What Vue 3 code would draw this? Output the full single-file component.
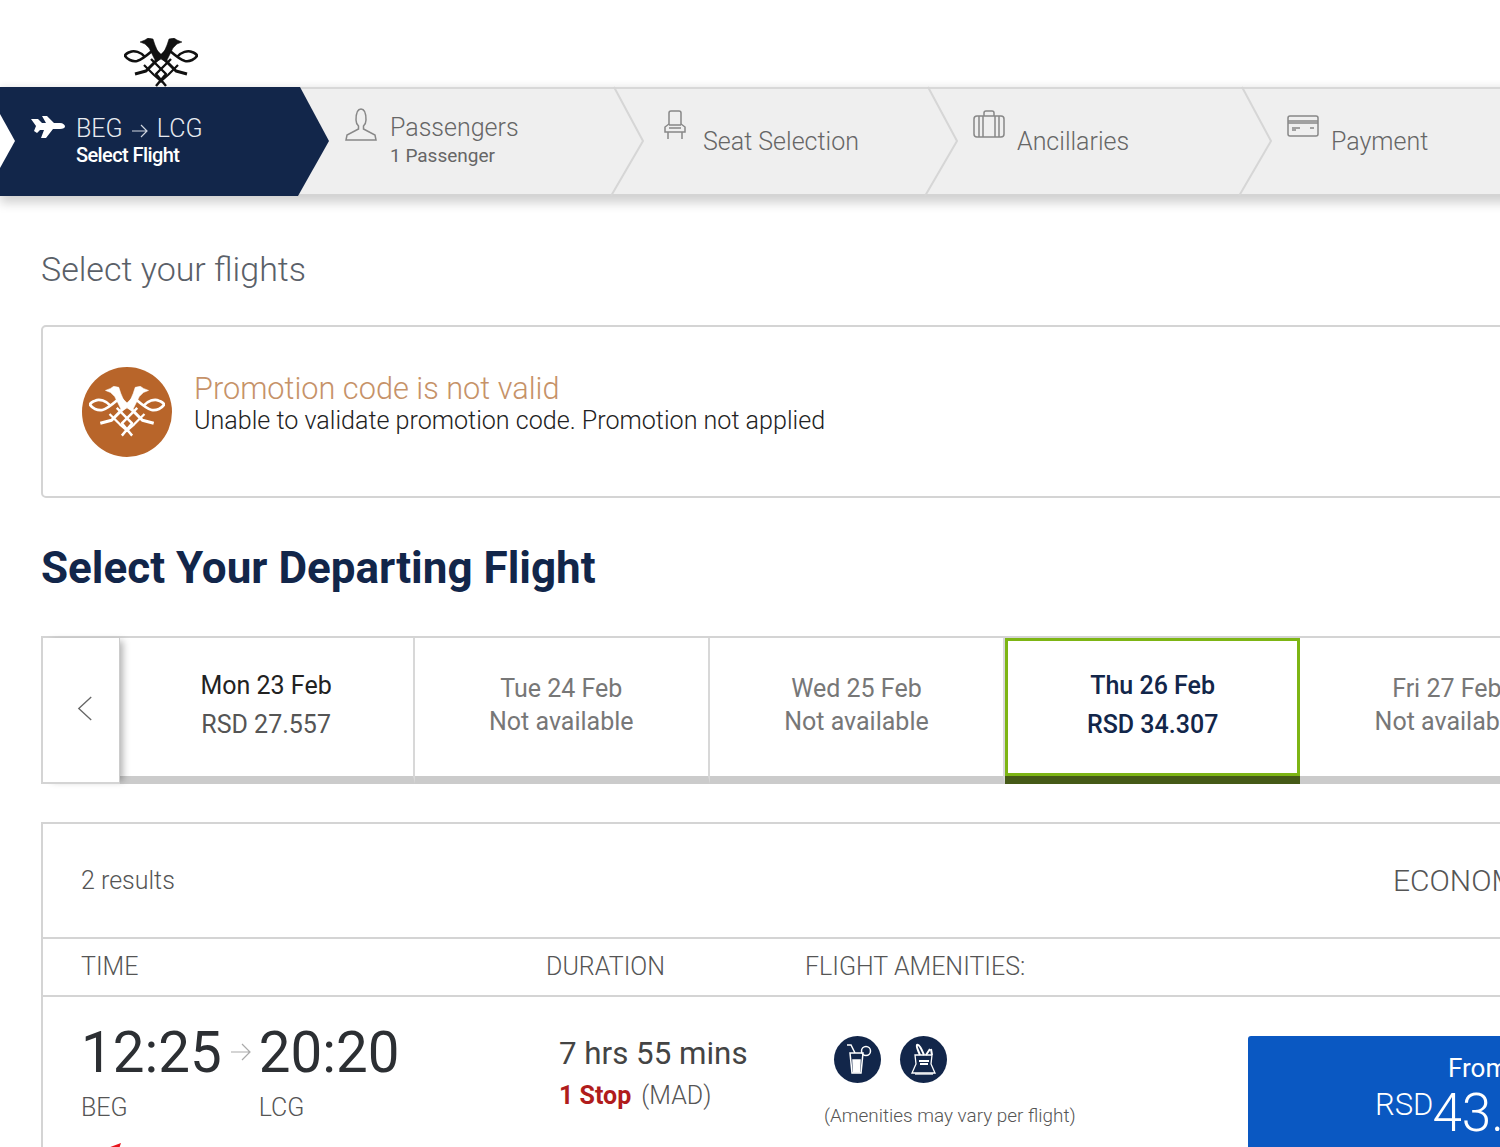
<script setup>
const eagle = [
  { d: 'M16 4 L21 2 L24 0 L29 1 L31 7 L37 21 L32 24 L25 10 L21 6 Z', w: 0.500, f: true },
  { d: 'M21 19 C17 14 10 12 6 14 C3 15 1 17 1 18 C3 21 8 24 13 23 C17 22 21 19 28 13', w: 2.600 },
  { d: 'M11 36 L22 33 L44 11', w: 3 },
  { d: 'M20 27 L30 37 L38 44', w: 2.200 },
  { d: 'M27 21 L42 36 L32 48', w: 2.400 }
]
const steps = [
  { name: 'Passengers', sub: '1 Passenger', icon: 'person' },
  { name: 'Seat Selection', icon: 'seat' },
  { name: 'Ancillaries', icon: 'bag' },
  { name: 'Payment', icon: 'card' }
]
const dates = [
  { day: 'Mon 23 Feb', price: 'RSD 27.557', kind: 'priced' },
  { day: 'Tue 24 Feb', price: 'Not available', kind: 'none' },
  { day: 'Wed 25 Feb', price: 'Not available', kind: 'none' },
  { day: 'Thu 26 Feb', price: 'RSD 34.307', kind: 'selected' },
  { day: 'Fri 27 Feb', price: 'Not available', kind: 'none' }
]
</script>

<template>
  <div class="page">
    <header class="top">
      <svg class="logo" viewBox="0 0 74 50" width="74" height="50" aria-hidden="true">
        <g stroke="#111" stroke-linejoin="round">
          <path v-for="p in eagle" :key="p.d" :d="p.d" :stroke-width="p.w" :fill="p.f ? '#111' : 'none'" />
          <g transform="translate(74 0) scale(-1 1)">
            <path v-for="p in eagle" :key="p.d" :d="p.d" :stroke-width="p.w" :fill="p.f ? '#111' : 'none'" />
          </g>
        </g>
      </svg>
    </header>

    <nav class="bar">
      <div class="active">
        <span class="notch"></span>
        <svg class="plane" viewBox="0 0 34 24" width="34" height="24" aria-hidden="true">
          <path fill="#fff" d="M0 4 L7 4 L11 8 L15 8 L11 1 L16 1 L23 8 L29 8 C32 8 34 10 34 11.500 C34 13 32 14 29 14 L22 14 L15 23 L10 23 L13 15 L9 15 L6 18 L3 16 L5 11 Z" />
        </svg>
        <div class="active-text">
          <div class="route">BEG
            <svg class="route-arrow" viewBox="0 0 16 14" width="16" height="14" aria-hidden="true">
              <path d="M0 7 L15 7 M9 1 L15 7 L9 13" fill="none" stroke="#cfd5df" stroke-width="1.200" />
            </svg>
            LCG</div>
          <div class="active-sub">Select Flight</div>
        </div>
      </div>
      <div v-for="s in steps" :key="s.name" class="step">
        <span class="step-icon" :class="'i-' + s.icon">
          <svg v-if="s.icon === 'person'" viewBox="0 0 32 34" width="32" height="34" fill="none" stroke="#888" stroke-width="1.500">
            <path d="M11 12 C11 5 12.500 1 16 1 C19.500 1 21 5 21 12 C21 15 19.500 17 18.500 18 L18.500 21 L30 27 L31 32 L1 32 L2 27 L13.500 21 L13.500 18 C12.500 17 11 15 11 12 Z" />
          </svg>
          <svg v-else-if="s.icon === 'seat'" viewBox="0 0 32 30" width="32" height="30" fill="none" stroke="#888" stroke-width="1.500">
            <path d="M10 15 L10 3 C10 1.500 11 1 12 1 L20 1 C21 1 22 1.500 22 3 L22 15" />
            <path d="M10 14 L6 17 L6 22 L26 22 L26 17 L22 14" />
            <path d="M10 15 L22 15 M10 18 L22 18 M9 22 L9 29 M23 22 L23 29" />
          </svg>
          <svg v-else-if="s.icon === 'bag'" viewBox="0 0 32 28" width="32" height="28" fill="none" stroke="#888" stroke-width="1.500">
            <rect x="1" y="6" width="30" height="21" rx="3" />
            <path d="M11 6 L11 3 C11 1.500 12 1 13 1 L19 1 C20 1 21 1.500 21 3 L21 6" />
            <path d="M6 6 L6 27 M10 6 L10 27 M22 6 L22 27 M26 6 L26 27" />
          </svg>
          <svg v-else viewBox="0 0 32 22" width="32" height="22" fill="none" stroke="#888" stroke-width="1.500">
            <rect x="1" y="1" width="30" height="20" rx="2" />
            <path d="M1 6 L31 6 M1 8 L31 8 M5 13 L13 13 M5 15 L9 15 M23 13 L27 13" />
          </svg>
        </span>
        <div class="step-text" :class="{ two: s.sub }">
          <div class="step-name">{{ s.name }}</div>
          <div v-if="s.sub" class="step-sub">{{ s.sub }}</div>
        </div>
        <svg class="chev" viewBox="0 0 32 109" width="32" height="109" aria-hidden="true">
          <path d="M1 0 L30 54 L-2 109" fill="none" stroke="#d6d6d6" stroke-width="2" />
        </svg>
      </div>
    </nav>

    <main class="content">
      <h1 class="page-title">Select your flights</h1>

      <section class="promo">
        <span class="badge">
          <svg viewBox="0 0 74 50" width="76" height="52" aria-hidden="true">
            <g stroke="#fff" stroke-linejoin="round">
              <path v-for="p in eagle" :key="p.d" :d="p.d" :stroke-width="p.w" :fill="p.f ? '#fff' : 'none'" />
              <g transform="translate(74 0) scale(-1 1)">
                <path v-for="p in eagle" :key="p.d" :d="p.d" :stroke-width="p.w" :fill="p.f ? '#fff' : 'none'" />
              </g>
            </g>
          </svg>
        </span>
        <div class="promo-text">
          <div class="promo-title">Promotion code is not valid</div>
          <div class="promo-body">Unable to validate promotion code. Promotion not applied</div>
        </div>
      </section>

      <h2 class="heading">Select Your Departing Flight</h2>

      <section class="dates">
        <div class="prev">
          <svg viewBox="0 0 18 30" width="16" height="27" aria-hidden="true">
            <path d="M16 2 L2 15 L16 28" fill="none" stroke="#666" stroke-width="1.500" />
          </svg>
        </div>
        <div v-for="d in dates" :key="d.day" class="date" :class="d.kind">
          <div class="date-day">{{ d.day }}</div>
          <div class="date-price">{{ d.price }}</div>
        </div>
      </section>

      <section class="results">
        <div class="results-head">
          <span class="count">2 results</span>
          <span class="cabin">ECONOMY</span>
        </div>
        <div class="cols">
          <span class="col-time">TIME</span>
          <span class="col-dur">DURATION</span>
          <span>FLIGHT AMENITIES:</span>
        </div>
        <div class="flight">
          <div class="times">
            <div class="time-row">
              <div class="point">
                <div class="clock">12:25</div>
                <div class="code">BEG</div>
              </div>
              <svg class="time-arrow" viewBox="0 0 20 20" width="20" height="20" aria-hidden="true">
                <path d="M0 10 L19 10 M11 2 L19 10 L11 18" fill="none" stroke="#aaa" stroke-width="1.200" />
              </svg>
              <div class="point arrival">
                <div class="clock">20:20</div>
                <div class="code">LCG</div>
              </div>
            </div>
            <svg class="carrier" viewBox="0 0 20 6" width="20" height="6" aria-hidden="true">
              <path d="M0 6 C6 5 12 2 18 0 L16 6 Z" fill="#e8141c" />
            </svg>
          </div>
          <div class="duration">
            <div class="dur-main">7 hrs 55 mins</div>
            <div class="stops"><b>1 Stop</b> <span>(MAD)</span></div>
          </div>
          <div class="amenities">
            <div class="am-icons">
              <span class="am">
                <svg viewBox="0 0 47 47" width="47" height="47" fill="none" stroke="#fff" stroke-width="1.500">
                  <path d="M16 17 L18 37 L27 37 L29 17 Z" />
                  <path d="M19 24 L26 24 L25.500 36 L19.500 36 Z" fill="#fff" />
                  <path d="M21 17 L17 9 L13 9" />
                  <circle cx="32" cy="15" r="4.500" />
                </svg>
              </span>
              <span class="am">
                <svg viewBox="0 0 47 47" width="47" height="47" fill="none" stroke="#fff" stroke-width="1.300">
                  <path d="M15 19 L32 19 L31 28 L35 37 L12 37 L16 28 Z" />
                  <path d="M15 38 L33 38" />
                  <path d="M20 19 C18 14 16 11 17 9 C19 8 21 12 24 19" stroke-width="2" />
                  <path d="M26 19 L30 13 M31 13 L32 19" stroke-width="2" />
                  <path d="M19 25 L29 25 M20 28 L28 28" stroke-width="2" />
                </svg>
              </span>
            </div>
            <div class="am-note">(Amenities may vary per flight)</div>
          </div>
          <div class="fare">
            <div class="from">From</div>
            <div class="fare-price"><span class="cur">RSD</span><span class="amount">43.000</span></div>
          </div>
        </div>
      </section>
    </main>
  </div>
</template>

<style>
html, body { margin: 0; overflow: hidden; background: #fff; }
</style>

<style scoped>
.page {
  width: 1500px;
  height: 1147px;
  overflow: hidden;
  position: relative;
  background: #fff;
  font-family: Roboto, "Liberation Sans", sans-serif;
  color: #555;
}
.top { height: 87px; position: relative; }
.logo { position: absolute; left: 124px; top: 38px; }

.bar {
  display: flex;
  width: 1700px;
  height: 109px;
  box-sizing: border-box;
  background: #efefef;
  border-top: 2px solid #d8d8d8;
  border-bottom: 2px solid #d4d4d4;
  box-shadow: 0 7px 10px rgba(0, 0, 0, 0.18), 0 -3px 6px rgba(0, 0, 0, 0.05);
  position: relative;
}
.active {
  flex: none;
  width: 330px;
  height: 109px;
  margin: -2px -30px -2px 0;
  padding: 26px 0 0 31px;
  box-sizing: border-box;
  background: #12264a;
  clip-path: polygon(0 0, 300px 0, 329px 54px, 298px 109px, 0 109px);
  display: flex;
  gap: 11px;
  position: relative;
  z-index: 2;
  color: #fff;
}
.notch {
  position: absolute;
  left: 0;
  top: 27px;
  width: 15px;
  height: 54px;
  background: #fff;
  clip-path: polygon(0 0, 100% 50%, 0 100%);
}
.plane { margin-top: 2px; }
.route { font-size: 25px; font-weight: 300; line-height: 32px; color: #e8ebf0; }
.route-arrow { margin: 0 3px; vertical-align: -1px; }
.active-sub { font-size: 20px; font-weight: 500; letter-spacing: -0.6px; line-height: 24px; margin-top: -2px; }

.step {
  flex: none;
  width: 314px;
  box-sizing: border-box;
  padding: 19px 0 0 45px;
  display: flex;
  align-items: flex-start;
  gap: 12px;
  position: relative;
}
.step-icon { width: 32px; display: flex; justify-content: center; flex: none; }
.i-seat { margin-top: 2px; }
.i-bag { margin-top: 2px; }
.i-card { margin-top: 7px; }
.step-text { margin-top: 18px; }
.step-text.two { margin-top: 4px; margin-left: 1px; }
.step-name { font-size: 25px; font-weight: 300; line-height: 32px; color: #666; }
.step-sub { font-size: 19px; font-weight: 400; line-height: 24px; margin-top: 0; color: #666; }
.chev { position: absolute; left: 100%; top: -2px; margin-left: -1px; overflow: visible; }

.content { padding: 0 0 0 41px; width: 1660px; }
.page-title {
  margin: 52px 0 0;
  font-size: 34px;
  line-height: 42px;
  font-weight: 300;
  color: #5a6068;
}
.promo {
  margin-top: 35px;
  height: 173px;
  box-sizing: border-box;
  border: 2px solid #d4d4d4;
  border-radius: 5px;
  display: flex;
  align-items: center;
  padding-left: 39px;
  gap: 22px;
}
.badge {
  width: 90px;
  height: 90px;
  border-radius: 50%;
  background: #b8652a;
  display: flex;
  align-items: center;
  justify-content: center;
  flex: none;
}
.promo-text { margin-top: -17px; }
.promo-title { font-size: 30.700px; font-weight: 300; line-height: 35px; color: #c69268; }
.promo-body { font-size: 25.100px; font-weight: 300; line-height: 30px; color: #222; }
.heading {
  margin: 43px 0 0;
  font-size: 44px;
  line-height: 54px;
  font-weight: 700;
  color: #12264a;
}
.dates {
  margin-top: 41px;
  display: flex;
  height: 148px;
  box-sizing: border-box;
  border: 2px solid #d4d4d4;
  border-bottom: none;
}
.prev {
  flex: none;
  width: 76.500px;
  height: 146px;
  box-sizing: border-box;
  border-bottom: 2px solid #d4d4d4;
  display: flex;
  align-items: center;
  justify-content: center;
  padding: 0 0 4px 9px;
  position: relative;
  z-index: 1;
  background: #fff;
  border-right: 1px solid #ccc;
  box-shadow: 6px 0 7px -3px rgba(0, 0, 0, 0.3);
}
.date {
  flex: none;
  width: 295.200px;
  height: 146px;
  box-sizing: border-box;
  border-right: 2px solid #d8d8d8;
  border-bottom: 8px solid #cbcbcb;
  display: flex;
  flex-direction: column;
  align-items: center;
  padding-top: 31px;
  font-size: 25px;
  color: #777;
}
.date-day { line-height: 34px; }
.date-price { line-height: 32px; }
.date.none { padding-top: 34px; }
.date.priced .date-day { color: #222; }
.date.priced .date-price { line-height: 44px; color: #555; }
.date.selected {
  color: #12264a;
  border: 3px solid #7db514;
  border-bottom: none;
  padding-top: 28px;
  position: relative;
  font-weight: 500;
}
.date.selected::after {
  content: "";
  position: absolute;
  left: -3px;
  right: -3px;
  bottom: 0;
  height: 8px;
  background: #455a17;
  border-top: 3px solid #7db514;
}
.date.selected .date-price { line-height: 44px; }

.results {
  margin-top: 38px;
  border: 2px solid #d4d4d4;
  border-bottom: none;
  height: 400px;
}
.results-head {
  height: 115px;
  box-sizing: border-box;
  display: flex;
  justify-content: space-between;
  align-items: center;
  padding-left: 38px;
  border-bottom: 2px solid #d4d4d4;
}
.count { font-size: 25px; font-weight: 300; color: #555; }
.cabin { font-size: 30px; font-weight: 300; color: #555; margin-right: 164px; }
.cols {
  height: 58px;
  box-sizing: border-box;
  display: flex;
  align-items: center;
  padding: 0 0 2px 38px;
  border-bottom: 2px solid #d4d4d4;
  font-size: 25px;
  font-weight: 300;
  color: #555;
}
.col-time { width: 465px; }
.col-dur { width: 259px; }

.flight { display: flex; align-items: flex-start; padding: 0 0 0 38px; }
.times { width: 478px; flex: none; padding-top: 23px; }
.time-row { display: flex; align-items: flex-start; gap: 9px; }
.point { display: flex; flex-direction: column; }
.arrival { margin-left: -1px; }
.clock { font-size: 56.500px; line-height: 66px; font-weight: 400; color: #2c2f33; }
.code { font-size: 25px; font-weight: 300; line-height: 30px; margin-top: 7px; color: #555; }
.time-arrow { margin-top: 22px; }
.carrier { display: block; margin: 20px 0 0 22px; }
.duration { width: 265px; flex: none; padding-top: 38px; }
.dur-main { font-size: 31.300px; line-height: 38px; color: #444; }
.stops { font-size: 25px; line-height: 32px; margin-top: 7px; font-weight: 300; color: #555; }
.stops b { color: #b01c1c; font-weight: 700; }
.stops span { margin-left: 4px; }
.amenities { width: 424px; flex: none; padding-top: 39px; }
.am-icons { display: flex; gap: 19px; padding-left: 10px; }
.am { width: 47px; height: 47px; border-radius: 50%; background: #12264a; display: block; }
.am svg { display: block; }
.am-note { font-size: 18.900px; font-weight: 300; line-height: 24px; margin-top: 21px; color: #555; }
.fare {
  flex: none;
  width: 400px;
  height: 200px;
  margin-top: 39px;
  background: #0a58c2;
  border-radius: 3px;
  color: #fff;
  box-sizing: border-box;
  padding: 17px 0 0 127px;
}
.from { font-size: 26px; line-height: 30px; padding-left: 73px; }
.fare-price { display: flex; align-items: flex-start; }
.cur { font-size: 31px; font-weight: 300; line-height: 36px; margin-top: 4px; }
.amount { font-size: 53px; font-weight: 300; line-height: 60px; margin: 0 0 0 -1px; }
</style>
